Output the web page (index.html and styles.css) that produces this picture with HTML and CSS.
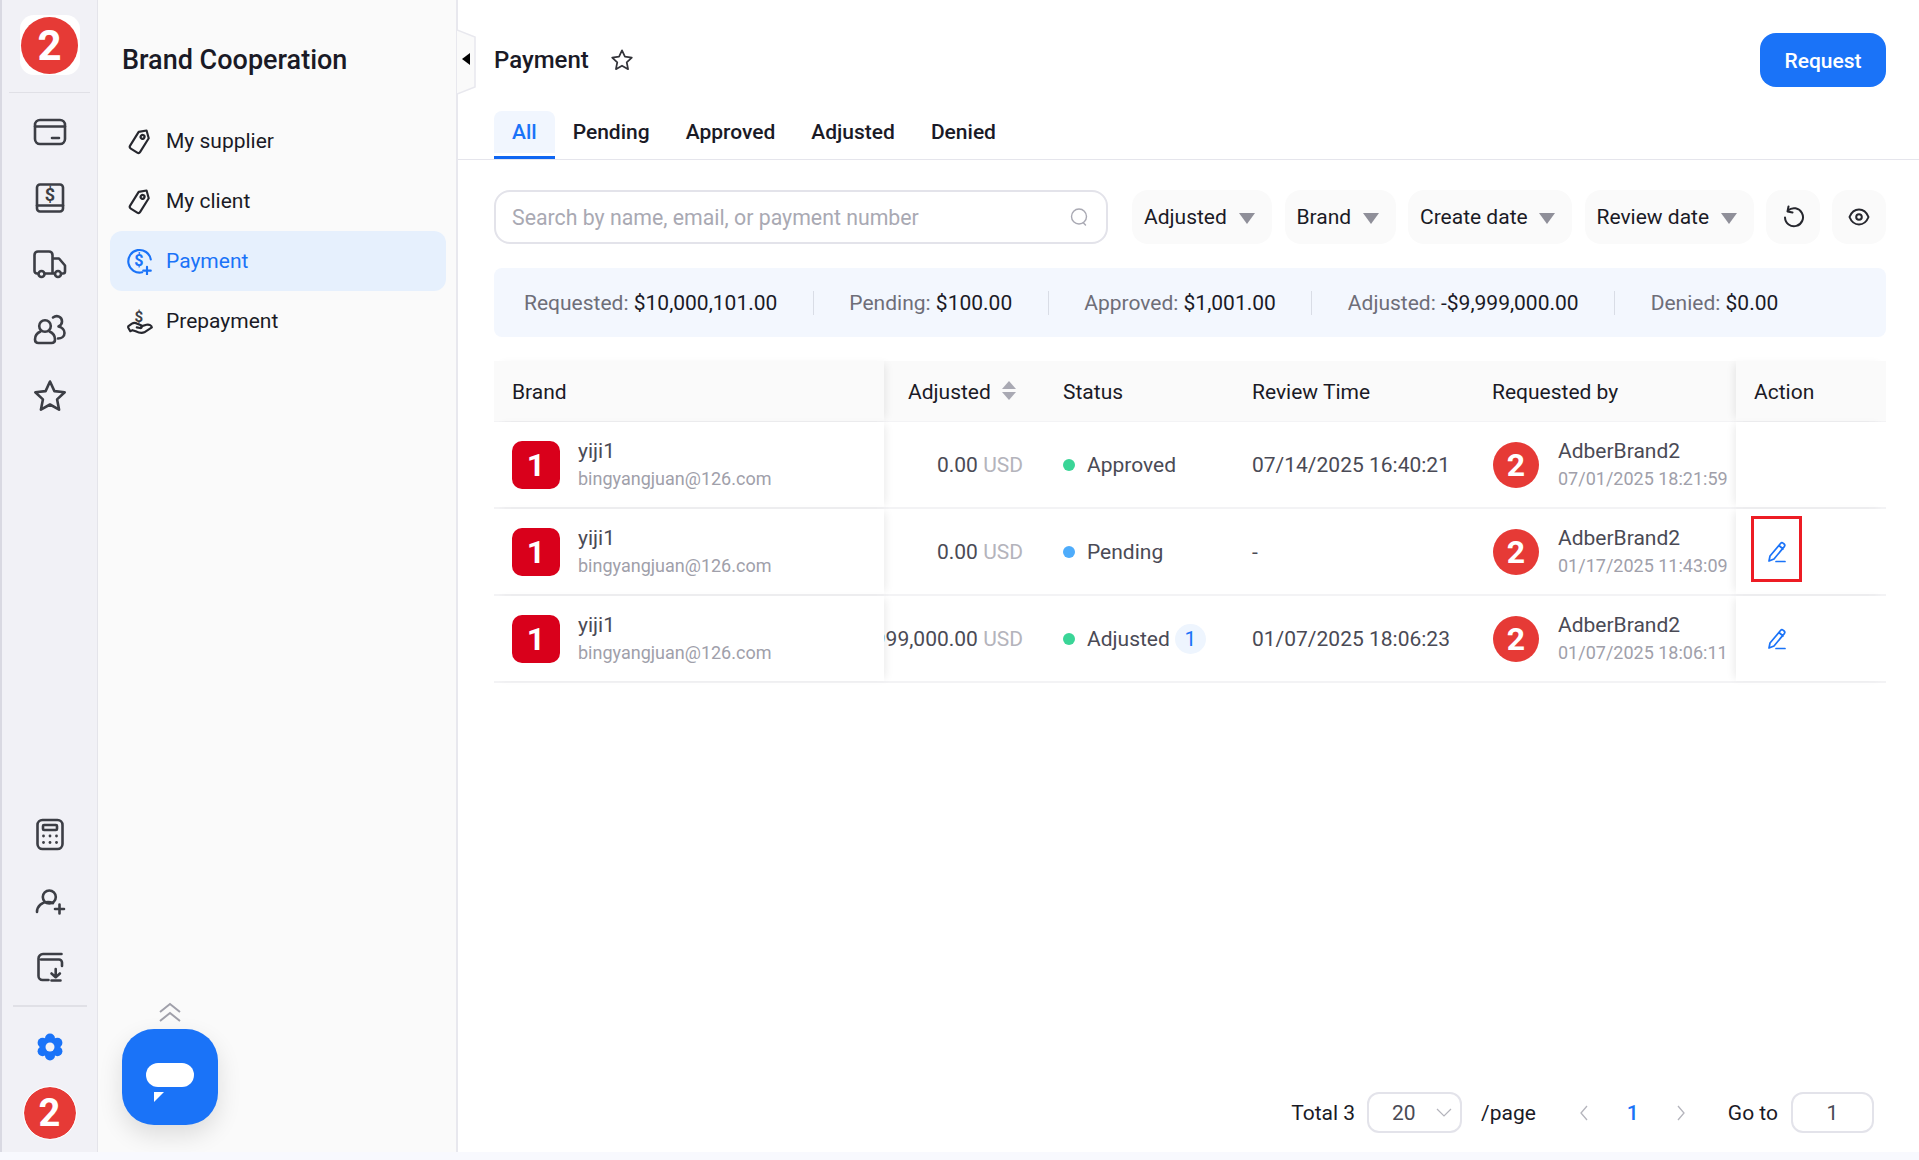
FILE: index.html
```html
<!DOCTYPE html>
<html lang="en">
<head>
    <meta charset="UTF-8">
    <meta name="viewport" content="width=device-width, initial-scale=1.0">
    <title>Payment</title>
    <link rel="stylesheet" href="styles.css">
</head>
<body>
    <div class="page">
        <!-- icon rail -->
        <nav class="rail">
            <div class="logo"><span class="circle-two logo-two">2</span></div>
            <div class="rail-line"></div>
            <a class="rail-item"><svg width="36" height="36" viewBox="0 0 36 36" class="ico"><rect x="3" y="6" width="30" height="24" rx="5"/><path d="M3 12.500h30M20 24h7"/></svg></a>
            <a class="rail-item"><svg width="36" height="36" viewBox="0 0 36 36" class="ico"><rect x="5" y="4.500" width="26" height="27" rx="3"/><path d="M5 25.500h26"/><text x="18" y="21" class="ico-text" font-size="18">$</text></svg></a>
            <a class="rail-item"><svg width="36" height="36" viewBox="0 0 36 36" class="ico"><path d="M6 27.500h-1a2.500 2.500 0 0 1-2.500-2.500v-16a3.500 3.500 0 0 1 3.500-3.500h11a3.500 3.500 0 0 1 3.500 3.500v18.500M13 27.500h9M21 12.500h6l6 7v6a2 2 0 0 1-2 2h-.500"/><circle cx="9.500" cy="28" r="3"/><circle cx="26" cy="28" r="3"/></svg></a>
            <a class="rail-item"><svg width="36" height="36" viewBox="0 0 36 36" class="ico"><circle cx="13" cy="14" r="5.800"/><path d="M8.500 19.500c-3.500 1.500-5.500 4.500-5.500 8 0 2.300 1.300 3.500 3.500 3.500h13c2.200 0 3.500-1.200 3.500-3.500 0-3.500-2-6.500-5.500-8"/><path d="M21 5.500c4-3 9-.5 9 4 0 2.500-1.500 4-3.500 5 3.500.8 6 3.500 6 6.500 0 3.500-3 5.500-6.500 5.500"/></svg></a>
            <a class="rail-item"><svg width="36" height="36" viewBox="0 0 36 36" class="ico"><path d="M18 3.500l4.400 9.600 10.300 1.200-7.600 7.100 2 10.300L18 26.500l-9.100 5.200 2-10.300-7.600-7.100 10.300-1.200z"/></svg></a>

            <div class="rail-bottom">
                <a class="rail-item"><svg width="36" height="36" viewBox="0 0 36 36" class="ico"><rect x="5.500" y="3" width="25" height="29" rx="5"/><rect x="11" y="8" width="14" height="5" rx="1"/><g class="ico-fill"><circle cx="11.500" cy="19" r="1.400"/><circle cx="18" cy="19" r="1.400"/><circle cx="24.500" cy="19" r="1.400"/><circle cx="11.500" cy="25.500" r="1.400"/><circle cx="18" cy="25.500" r="1.400"/><circle cx="24.500" cy="25.500" r="1.400"/></g></svg></a>
                <a class="rail-item"><svg width="36" height="36" viewBox="0 0 36 36" class="ico"><circle cx="17.300" cy="14" r="6.500"/><path d="M5 29c0-6 5-10 11-10 2 0 3.500.4 5 1.200M23 26h9M27.500 21.500v9"/></svg></a>
                <a class="rail-item"><svg width="36" height="36" viewBox="0 0 36 36" class="ico"><path d="M29.500 5H11a4.500 4.500 0 0 0-4.500 4.500V27a4 4 0 0 0 4 4h6M9 10.500h18a3 3 0 0 1 3 3V17M23.700 20v8M19.500 24.500l4.200 3.700 4.200-3.700M19.500 31.500h9"/></svg></a>
                <div class="rail-line rail-line-low"></div>
                <a class="rail-item"><svg width="30" height="30" viewBox="0 0 30 30"><g fill="#1a73f8"><circle cx="15" cy="15" r="9"/><circle cx="15" cy="6.500" r="5"/><circle cx="22.400" cy="10.750" r="5"/><circle cx="22.400" cy="19.250" r="5"/><circle cx="15" cy="23.500" r="5"/><circle cx="7.600" cy="19.250" r="5"/><circle cx="7.600" cy="10.750" r="5"/></g><circle cx="15" cy="15" r="4.500" fill="#f1f1f6"/></svg></a>
                <span class="circle-two user-two">2</span>
            </div>
        </nav>

        <!-- second menu -->
        <aside class="side">
            <h2 class="side-title">Brand Cooperation</h2>
            <ul class="menu">
                <li class="menu-item">
                    <svg width="28" height="28" viewBox="0 0 26 26" class="ico ico-sm"><g transform="rotate(32 13 13)"><path d="M13 1.500l5.500 5v15a2 2 0 0 1-2 2h-7a2 2 0 0 1-2-2v-15z"/><circle cx="13" cy="8.500" r="1.800"/></g></svg>
                    My supplier
                </li>
                <li class="menu-item">
                    <svg width="28" height="28" viewBox="0 0 26 26" class="ico ico-sm"><g transform="rotate(32 13 13)"><path d="M13 1.500l5.500 5v15a2 2 0 0 1-2 2h-7a2 2 0 0 1-2-2v-15z"/><circle cx="13" cy="8.500" r="1.800"/></g></svg>
                    My client
                </li>
                <li class="menu-item active">
                    <svg width="28" height="28" viewBox="0 0 26 26" class="ico ico-sm ico-blue"><path d="M15 23.500A10.500 10.500 0 1 1 23 11.500"/><path d="M16 22h7M19.500 18.500v7"/><text x="12" y="17.500" class="ico-text ico-text-blue" font-size="15">$</text></svg>
                    Payment
                </li>
                <li class="menu-item">
                    <svg width="28" height="28" viewBox="0 0 26 26" class="ico ico-sm"><path d="M2 18l3.500-2.500c2-1.200 3.500-.8 5 0l3.500 1.500c1.500.8 .8 2.800-1 2.500l-3-.6M14 18l5-1.500c2.500-.7 5 .8 5 2.500l-7 4.500c-3 1.300-6 0-8-1l-3-1-2 1-2-3.500"/><text x="12" y="13.500" class="ico-text" font-size="14">$</text></svg>
                    Prepayment
                </li>
            </ul>
            <svg class="chev-up" width="22" height="20" viewBox="0 0 22 20"><path d="M1 10l10-8 10 8M1 19l10-8 10 8" fill="none" stroke="#a0a0aa" stroke-width="2"/></svg>
            <div class="chat">
                <span class="chat-pill"></span>
                <span class="chat-tail"></span>
            </div>
        </aside>

        <!-- content -->
        <main class="main">
            <svg class="handle" width="19" height="66" viewBox="0 0 19 66"><path d="M0 1l18 7v50L0 65" fill="#fafafa" stroke="#e8e8ee" stroke-width="1.500"/><path d="M13 24v12l-8-6z" fill="#000"/></svg>

            <div class="head">
                <div class="head-left">
                    <h1 class="title">Payment</h1>
                    <svg width="24" height="24" viewBox="0 0 36 36" class="ico ico-title"><path d="M18 3.500l4.400 9.600 10.300 1.200-7.600 7.100 2 10.300L18 26.500l-9.100 5.200 2-10.300-7.600-7.100 10.300-1.200z"/></svg>
                </div>
                <button class="btn-primary">Request</button>
            </div>

            <div class="tabs">
                <a class="tab tab-on"><span>All</span></a>
                <a class="tab"><span>Pending</span></a>
                <a class="tab"><span>Approved</span></a>
                <a class="tab"><span>Adjusted</span></a>
                <a class="tab"><span>Denied</span></a>
            </div>

            <div class="tools">
                <div class="search">
                    <span>Search by name, email, or payment number</span>
                    <svg width="22" height="22" viewBox="0 0 22 22" class="ico-search"><circle cx="11" cy="10.500" r="7.500"/><path d="M15.500 17l2 2"/></svg>
                </div>
                <div class="filter filter-a">Adjusted<i class="caret"></i></div>
                <div class="filter filter-b">Brand<i class="caret"></i></div>
                <div class="filter filter-c">Create date<i class="caret"></i></div>
                <div class="filter filter-d">Review date<i class="caret"></i></div>
                <div class="icon-btn"><svg width="24" height="24" viewBox="0 0 24 24" class="ico ico-dark"><path d="M7 5.500A9 9 0 1 1 4 12.500M7.500 1.500L6.500 6.500l5 1"/></svg></div>
                <div class="icon-btn"><svg width="22" height="22" viewBox="0 0 22 22" class="ico ico-dark"><path d="M1.500 11C3.500 6 7 3.500 11 3.500s7.500 2.500 9.500 7.500c-2 5-5.500 7.500-9.500 7.500s-7.500-2.500-9.500-7.500z"/><circle cx="11" cy="11" r="2.800"/></svg></div>
            </div>

            <div class="stats">
                <div class="stat">Requested: <b>$10,000,101.00</b></div>
                <i class="stat-sep"></i>
                <div class="stat">Pending: <b>$100.00</b></div>
                <i class="stat-sep"></i>
                <div class="stat">Approved: <b>$1,001.00</b></div>
                <i class="stat-sep"></i>
                <div class="stat">Adjusted: <b>-$9,999,000.00</b></div>
                <i class="stat-sep"></i>
                <div class="stat">Denied: <b>$0.00</b></div>
            </div>

            <div class="table">
                <div class="row row-head">
                    <div class="cell fix-l">Brand</div>
                    <div class="cell cell-adj-head">Adjusted
                        <span class="sort"><i class="sort-up"></i><i class="sort-down"></i></span>
                    </div>
                    <div class="cell">Status</div>
                    <div class="cell">Review Time</div>
                    <div class="cell">Requested by</div>
                    <div class="cell fix-r">Action</div>
                </div>

                <div class="row">
                    <div class="cell fix-l">
                        <span class="brand-ico">1</span>
                        <div class="two-line"><div class="line-a">yiji1</div><div class="line-b">bingyangjuan@126.com</div></div>
                    </div>
                    <div class="cell cell-amt"><span>0.00 <em>USD</em></span></div>
                    <div class="cell"><i class="dot dot-green"></i>Approved</div>
                    <div class="cell">07/14/2025 16:40:21</div>
                    <div class="cell">
                        <span class="circle-two row-two">2</span>
                        <div class="two-line"><div class="line-a">AdberBrand2</div><div class="line-b">07/01/2025 18:21:59</div></div>
                    </div>
                    <div class="cell fix-r"></div>
                </div>

                <div class="row">
                    <div class="cell fix-l">
                        <span class="brand-ico">1</span>
                        <div class="two-line"><div class="line-a">yiji1</div><div class="line-b">bingyangjuan@126.com</div></div>
                    </div>
                    <div class="cell cell-amt"><span>0.00 <em>USD</em></span></div>
                    <div class="cell"><i class="dot dot-blue"></i>Pending</div>
                    <div class="cell">-</div>
                    <div class="cell">
                        <span class="circle-two row-two">2</span>
                        <div class="two-line"><div class="line-a">AdberBrand2</div><div class="line-b">01/17/2025 11:43:09</div></div>
                    </div>
                    <div class="cell fix-r">
                        <svg width="24" height="24" viewBox="0 0 24 24" class="ico ico-edit"><path d="M5 16L15.500 3.500c.8-.9 1.800-1 2.600-.3l1 .8c.8.7 .9 1.700 .2 2.600L9 19l-5 2zM14 5.500l4 3.500M11 21.500h9"/></svg>
                        <span class="mark"></span>
                    </div>
                </div>

                <div class="row">
                    <div class="cell fix-l">
                        <span class="brand-ico">1</span>
                        <div class="two-line"><div class="line-a">yiji1</div><div class="line-b">bingyangjuan@126.com</div></div>
                    </div>
                    <div class="cell cell-amt"><span>-9,999,000.00 <em>USD</em></span></div>
                    <div class="cell"><i class="dot dot-green"></i>Adjusted<span class="count">1</span></div>
                    <div class="cell">01/07/2025 18:06:23</div>
                    <div class="cell">
                        <span class="circle-two row-two">2</span>
                        <div class="two-line"><div class="line-a">AdberBrand2</div><div class="line-b">01/07/2025 18:06:11</div></div>
                    </div>
                    <div class="cell fix-r">
                        <svg width="24" height="24" viewBox="0 0 24 24" class="ico ico-edit"><path d="M5 16L15.500 3.500c.8-.9 1.800-1 2.600-.3l1 .8c.8.7 .9 1.700 .2 2.600L9 19l-5 2zM14 5.500l4 3.500M11 21.500h9"/></svg>
                    </div>
                </div>
            </div>

            <div class="pager">
                <span>Total 3</span>
                <div class="pager-select">20
                    <svg width="16" height="10" viewBox="0 0 16 10"><path d="M1 1l7 7 7-7" fill="none" stroke="#b4b4bc" stroke-width="1.200"/></svg>
                </div>
                <span class="pager-unit">/page</span>
                <span class="pager-btn"><svg width="10" height="16" viewBox="0 0 10 16"><path d="M8 1L2 8l6 7" fill="none" stroke="#b4b4bc" stroke-width="1.300"/></svg></span>
                <span class="pager-btn pager-on">1</span>
                <span class="pager-btn"><svg width="10" height="16" viewBox="0 0 10 16"><path d="M2 1l6 7-6 7" fill="none" stroke="#b4b4bc" stroke-width="1.300"/></svg></span>
                <span class="pager-goto">Go to</span>
                <div class="pager-input">1</div>
            </div>
        </main>
    </div>
</body>
</html>
```
FILE: styles.css
```css
*{margin:0;padding:0;box-sizing:border-box;}
body{
    background: #f8f9fe;
    font-family: Roboto, "Liberation Sans", sans-serif;
    font-size: 21px;
    color: #1a1a26;
}
i{font-style: normal;}
em{font-style: normal;}
li{list-style: none;}

.page{
    display: flex;
    width: 1919px;
    height: 1152px;
    border-left: 2px solid #d9d9e2;
}

/* svg icons */
.ico{
    fill: none;
    stroke: #3c3e45;
    stroke-width: 2.600;
    stroke-linecap: round;
    stroke-linejoin: round;
}
.ico-fill circle{fill: #3c3e45;stroke: none;}
.ico-text{
    font-family: Roboto, sans-serif;
    font-weight: 700;
    text-anchor: middle;
    fill: #3c3e45;
    stroke: none;
}
.ico-sm{stroke: #26272e;stroke-width: 2;flex: none;}
.ico-blue{stroke: #1a73f8;}
.ico-text-blue{fill: #1a73f8;}
.ico-dark{stroke: #26272e;stroke-width: 2;}
.ico-title{stroke: #33343a;}
.ico-edit{stroke: #1a73f8;stroke-width: 1.700;margin-left: 11px;}

.circle-two{
    display: flex;
    align-items: center;
    justify-content: center;
    flex: none;
    border-radius: 50%;
    background: #e63a36;
    color: #fff;
    font-weight: 700;
}

/* rail */
.rail{
    display: flex;
    flex-direction: column;
    align-items: center;
    width: 96px;
    flex: none;
    background: #f1f1f6;
    border-right: 1px solid #e4e4ea;
    padding: 15px 0 13px;
}
.logo{
    display: flex;
    align-items: center;
    justify-content: center;
    width: 60px;
    height: 60px;
    background: #fff;
    border-radius: 14px;
}
.logo-two{width: 57px;height: 57px;font-size: 42px;}
.rail-line{
    width: 81px;
    height: 1px;
    background: #e0e0e6;
    margin: 17px 0 6px;
}
.rail-line-low{
    width: 74px;
    height: 2px;
    margin: 5px 0 7px;
}
.rail-item{
    display: flex;
    align-items: center;
    justify-content: center;
    width: 66px;
    height: 66px;
}
.rail-bottom{
    display: flex;
    flex-direction: column;
    align-items: center;
    margin-top: auto;
}
.user-two{
    width: 52px;
    height: 52px;
    margin-top: 7px;
    font-size: 38px;
    outline: 1px solid #fff;
}

/* second menu */
.side{
    position: relative;
    width: 360px;
    flex: none;
    background: #fafafa;
    border-right: 2px solid #e8e8ee;
    padding: 0 10px 0 12px;
}
.side-title{
    font-size: 27px;
    font-weight: 500;
    line-height: 30px;
    padding: 45px 0 0 12px;
    margin-bottom: 36px;
}
.menu-item{
    display: flex;
    align-items: center;
    gap: 12px;
    height: 60px;
    padding-left: 16px;
    border-radius: 12px;
}
.menu-item.active{
    background: #e6f0fd;
    color: #1a73f8;
}
.chev-up{
    position: absolute;
    left: 61px;
    top: 1002px;
}
.chat{
    position: absolute;
    left: 24px;
    top: 1029px;
    width: 96px;
    height: 96px;
    border-radius: 32px;
    background: #1a73f8;
    box-shadow: 0 10px 24px rgba(0,0,0,0.12);
}
.chat-pill{
    position: absolute;
    left: 24px;
    top: 34px;
    width: 48px;
    height: 24px;
    border-radius: 12px;
    background: #fff;
}
.chat-tail{
    position: absolute;
    left: 32px;
    top: 63px;
    width: 10px;
    height: 10px;
    background: #fff;
    clip-path: polygon(0 0,100% 0,0 100%);
}

/* main */
.main{
    position: relative;
    display: flex;
    flex-direction: column;
    flex: 1;
    min-width: 0;
    background: #fff;
}
.handle{
    position: absolute;
    left: -1px;
    top: 29px;
}
.head{
    display: flex;
    justify-content: space-between;
    align-items: center;
    padding: 33px 33px 0 36px;
}
.head-left{
    display: flex;
    align-items: center;
    gap: 21px;
}
.title{
    font-size: 24px;
    font-weight: 500;
}
.btn-primary{
    width: 126px;
    height: 54px;
    border: none;
    border-radius: 16px;
    padding-top: 2px;
    background: #1a73f8;
    color: #fff;
    font-family: inherit;
    font-size: 21px;
    font-weight: 500;
}
.tabs{
    display: flex;
    margin-top: 24px;
    padding-left: 36px;
    border-bottom: 1px solid #e5e5ec;
}
.tab{
    height: 48px;
    padding-bottom: 3px;
    border-bottom: 3px solid transparent;
    font-weight: 500;
}
.tab span{
    display: block;
    height: 42px;
    line-height: 42px;
    padding: 0 18px;
    border-radius: 8px 8px 0 0;
}
.tab-on{border-bottom-color: #0f66f2;color: #1a73f8;}
.tab-on span{background: #f1f6fe;}

.tools{
    display: flex;
    gap: 12.500px;
    height: 54px;
    margin: 30px 33px 0 36px;
}
.search{
    display: flex;
    align-items: center;
    justify-content: space-between;
    width: 614px;
    margin-right: 11.500px;
    padding: 0 16px;
    border: 2px solid #e3e3ea;
    border-radius: 16px;
    font-size: 21.300px;
    color: #a9a9b3;
}
.ico-search{
    fill: none;
    stroke: #a9a9b3;
    stroke-width: 1.400;
    stroke-linecap: round;
}
.filter{
    display: flex;
    align-items: center;
    justify-content: space-between;
    padding: 0 17px 0 12px;
    border-radius: 16px;
    background: #fafafa;
}
.filter-a{width: 140px;}
.filter-b{width: 111px;}
.filter-c{width: 164px;}
.filter-d{width: 169px;}
.caret{
    width: 0;
    height: 0;
    border-left: 8.500px solid transparent;
    border-right: 8.500px solid transparent;
    border-top: 11px solid #8f8f99;
    margin-top: 3px;
}
.icon-btn{
    display: flex;
    align-items: center;
    justify-content: center;
    width: 53.500px;
    border-radius: 16px;
    background: #fafafa;
}

.stats{
    display: flex;
    align-items: center;
    gap: 35.500px;
    height: 69px;
    margin: 24px 33px 0 36px;
    padding-left: 30px;
    background: #f3f7fe;
    border-radius: 8px;
    color: #6e6e78;
}
.stat b{font-weight: 400;color: #1a1a26;}
.stat-sep{
    width: 1px;
    height: 24px;
    background: #d9dde6;
}

/* table */
.table{margin: 24px 33px 0 36px;}
.row{
    display: grid;
    grid-template-columns: 390px 161px 189px 240px 262px 150px;
    height: 87px;
    border-bottom: 2px solid #f3f3f5;
    color: #4a4a55;
}
.row-head{
    height: 61px;
    border-bottom: 1px solid #f3f3f5;
    background: #fafafa;
    color: #1a1a26;
}
.row-head .cell{padding-top: 1px;}
.cell{
    display: flex;
    align-items: center;
    padding: 0 18px;
    white-space: nowrap;
}
.fix-l,.fix-r{
    position: relative;
    z-index: 1;
    background: #fff;
}
.fix-l{box-shadow: 5px 0 8px -3px rgba(0,0,0,0.08);}
.fix-r{box-shadow: -5px 0 8px -3px rgba(0,0,0,0.08);}
.row-head .fix-l,.row-head .fix-r{background: #fafafa;}
.cell-adj-head{padding-left: 24px;}
.sort{
    display: flex;
    flex-direction: column;
    gap: 3px;
    margin-left: 11px;
    margin-bottom: 2px;
}
.sort-up,.sort-down{
    width: 0;
    height: 0;
    border-left: 7px solid transparent;
    border-right: 7px solid transparent;
}
.sort-up{border-bottom: 8px solid #a9a9b3;}
.sort-down{border-top: 8px solid #a9a9b3;}
.cell-amt{
    justify-content: flex-end;
    overflow: hidden;
    padding: 0 22px 0 0;
}
.cell-amt span{flex: none;}
.cell-amt em{color: #b4b4bc;}
.brand-ico{
    display: flex;
    align-items: center;
    justify-content: center;
    flex: none;
    width: 48px;
    height: 48px;
    border-radius: 10px;
    background: #d9001b;
    color: #fff;
    font-size: 32px;
    font-weight: 700;
    margin-right: 18px;
}
.row-two{
    width: 46px;
    height: 46px;
    font-size: 32px;
    margin-right: 19px;
    margin-left: 1px;
}
.line-a{line-height: 28px;}
.line-b{
    font-size: 18px;
    line-height: 28px;
    color: #a0a0aa;
}
.dot{
    width: 12px;
    height: 12px;
    border-radius: 50%;
    margin-right: 12px;
}
.dot-green{background: #3ad597;}
.dot-blue{background: #4eacfb;}
.count{
    display: flex;
    align-items: center;
    justify-content: center;
    width: 31px;
    height: 30px;
    margin-left: 5px;
    border-radius: 50%;
    background: #eef5fe;
    color: #1a73f8;
}
.mark{
    position: absolute;
    left: 15px;
    top: 7px;
    width: 51px;
    height: 66px;
    border: 3px solid #ed1c24;
}

/* pagination */
.pager{
    display: flex;
    align-items: center;
    justify-content: flex-end;
    margin-top: auto;
    padding: 0 45px 19px 0;
}
.pager-select{
    display: flex;
    align-items: center;
    justify-content: space-between;
    width: 95px;
    height: 41px;
    margin-left: 12px;
    padding: 0 8px 0 23px;
    border: 2px solid #e3e3ea;
    border-radius: 12px;
    color: #4a4a55;
}
.pager-unit{margin: 0 24px 0 19px;}
.pager-btn{
    display: flex;
    align-items: center;
    justify-content: center;
    width: 48.500px;
}
.pager-on{color: #1a73f8;font-weight: 500;}
.pager-goto{margin-left: 22.500px;}
.pager-input{
    display: flex;
    align-items: center;
    justify-content: center;
    width: 83px;
    height: 41px;
    margin-left: 13px;
    border: 2px solid #e3e3ea;
    border-radius: 12px;
    color: #4a4a55;
}
```
